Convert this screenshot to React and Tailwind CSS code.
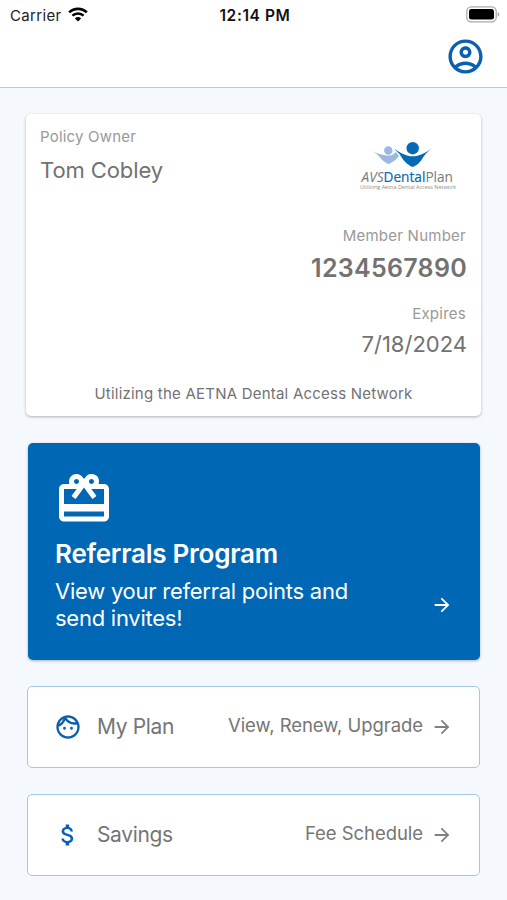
import {
  MdArrowForward,
  MdAttachMoney,
  MdOutlineAccountCircle,
  MdOutlineFace,
  MdRedeem,
} from 'react-icons/md'

const links = [
  { title: 'My Plan', detail: 'View, Renew, Upgrade', Icon: MdOutlineFace },
  { title: 'Savings', detail: 'Fee Schedule', Icon: MdAttachMoney },
]

function StatusBar() {
  return (
    <div className="grid grid-cols-3 items-center h-[30px] pl-2.5 pr-[7px] text-black">
      <div className="flex items-center gap-1.5">
        <span className="text-[15px] leading-none tracking-[0.35px] text-[#222]">Carrier</span>
        <svg className="mb-0.5" width="20" height="15" viewBox="0 0 20 15" fill="none" stroke="currentColor">
          <path d="M1.2 5.4a12.6 12.6 0 0 1 17.6 0" strokeWidth="2.7" />
          <path d="M4.4 8.7a8 8 0 0 1 11.2 0" strokeWidth="2.5" />
          <path d="M10 14.6 6.9 11.4a4.5 4.5 0 0 1 6.2 0z" fill="currentColor" stroke="none" />
        </svg>
      </div>
      <span className="pt-px text-center text-[15.5px] leading-none font-semibold tracking-[0.6px] whitespace-nowrap text-[#111]">
        12:14 PM
      </span>
      <svg className="justify-self-end mb-0.5" width="34" height="17" viewBox="0 0 34 17">
        <rect x="0.8" y="0.8" width="29.4" height="15" rx="4.5" fill="#fff" stroke="#aaa" strokeWidth="1.3" />
        <rect x="3" y="3" width="25" height="10.6" rx="2.4" fill="#000" />
        <path d="M31.6 6v4.6c1.3-.4 1.8-1.3 1.8-2.3s-.5-1.9-1.8-2.3z" fill="#aaa" />
      </svg>
    </div>
  )
}

function Logo() {
  return (
    <svg width="100" height="54" viewBox="0 0 100 54" className="shrink-0">
      <path d="M12 15q7 3.5 12 4q4 1.2 8 0q2-1 4-3l3 4q-3 4.500-8.500 7.300q-2 1-4 0q-4.500-2.500-7.500-7q-2.500-3.300-7-5.300z" fill="#9bb8e0" />
      <circle cx="28.3" cy="14.5" r="4.2" fill="#9bb8e0" />
      <path d="M34 12.500q8 6 14 7.200q5 1 9.500 0q7-1.700 14.500-7.700q-7 5.500-10.500 12q-2.500 4-7.500 6.500q-1.500.7-3 0q-5-2.800-8-7q-3.500-6.500-9-11z" fill="#0769b1" />
      <circle cx="52.7" cy="12.2" r="6.2" fill="#0769b1" />
      <text x="1.5" y="45.6" fontSize="14" textLength="91.5" lengthAdjust="spacingAndGlyphs" fontFamily='"Open Sans", sans-serif' fill="#77787b">
        <tspan fontStyle="italic">AVS</tspan>
        <tspan fill="#0769b1" stroke="#0769b1" strokeWidth="0.2">Dental</tspan>
        <tspan>Plan</tspan>
      </text>
      <text x="0" y="52.6" fontSize="5.2" textLength="96" lengthAdjust="spacingAndGlyphs" fontFamily='"Open Sans", sans-serif' fill="#8b8b8b">
        Utilizing Aetna Dental Access Network
      </text>
    </svg>
  )
}

function PolicyCard() {
  return (
    <section className="flex flex-col h-[302px] rounded-[5px] bg-white px-3.5 pt-3.5 shadow-[0_1px_3px_rgba(0,0,0,0.3)] text-[#727272]">
      <div className="flex justify-between h-[99px]">
        <div>
          <div className="text-[15px] leading-[18px] tracking-[0.2px] text-[#999]">Policy Owner</div>
          <div className="mt-[10px] text-[22px] leading-[28px] tracking-[-0.1px]">Tom Cobley</div>
        </div>
        <div className="pt-2 mr-[7px]">
          <Logo />
        </div>
      </div>
      <div className="text-right">
        <div className="text-[15px] leading-[18px] tracking-[0.25px] pr-px text-[#999]">Member Number</div>
        <div className="mt-2 text-[25px] leading-[30px] font-semibold tracking-[0.3px]">1234567890</div>
        <div className="mt-[22px] text-[15px] leading-[18px] tracking-[0.25px] pr-px text-[#999]">Expires</div>
        <div className="mt-[7px] text-[22px] leading-[28px]">7/18/2024</div>
      </div>
      <div className="mt-[27px] text-center text-[15px] leading-[18px] tracking-[0.22px]">
        Utilizing the AETNA Dental Access Network
      </div>
    </section>
  )
}

function ReferralsCard() {
  return (
    <section className="flex flex-col mt-[26.5px] ml-[1.5px] mr-px h-[217px] rounded-[5px] bg-[#0067b5] pl-[27.5px] pr-[27px] pt-[26px] text-white shadow-[0_1px_3px_rgba(0,0,0,0.3)]">
      <MdRedeem className="size-[60px] -ml-px" />
      <h2 className="mt-[9px] text-[26px] leading-[32px] font-semibold tracking-[-0.25px]">Referrals Program</h2>
      <div className="flex justify-between items-center mt-2">
        <p className="text-[22px] leading-[27px] tracking-[-0.25px] whitespace-nowrap">
          View your referral points and
          <br />
          send invites!
        </p>
        <MdArrowForward className="size-[22px]" />
      </div>
    </section>
  )
}

function LinkCard({ title, detail, Icon }) {
  return (
    <a className="flex items-center mt-[26px] mx-px h-[82px] rounded-[5px] border border-[#a3c8e3] bg-white pl-[26px] pr-[26px] text-[#757575]">
      <Icon className="size-7 text-[#0a5fb0]" />
      <span className="ml-[15px] mb-px text-[21px] leading-none tracking-[-0.35px]">{title}</span>
      <span className="ml-auto mb-[3px] text-[18.5px] leading-none tracking-[-0.05px]">{detail}</span>
      <MdArrowForward className="ml-2 size-[22px] text-[#808080]" />
    </a>
  )
}

export default function App() {
  return (
    <div className="h-[900px] w-[507px] overflow-hidden bg-[#f5f9fe] font-['Inter','Liberation_Sans',sans-serif]">
      <header className="h-[88px] border-b border-[#c4c7ca] bg-white">
        <StatusBar />
        <div className="flex justify-end pr-[21px] pt-1.5">
          <MdOutlineAccountCircle className="size-[41px] text-[#0a5fb0]" />
        </div>
      </header>
      <main className="px-[26px] pt-[26px]">
        <PolicyCard />
        <ReferralsCard />
        {links.map((link) => (
          <LinkCard key={link.title} {...link} />
        ))}
      </main>
    </div>
  )
}
